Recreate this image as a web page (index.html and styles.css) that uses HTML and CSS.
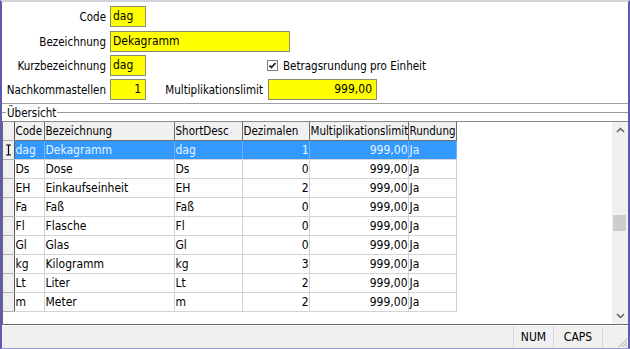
FILE: index.html
```html
<!DOCTYPE html>
<html lang="de">
<head>
    <meta charset="UTF-8">
    <title>Einheiten</title>
    <link rel="stylesheet" href="styles.css">
</head>
<body>
    <div class="window">
        <div class="form">
            <div class="row first">
                <label class="lbl">Code</label>
                <div class="field short">dag</div>
            </div>
            <div class="row">
                <label class="lbl">Bezeichnung</label>
                <div class="field long">Dekagramm</div>
            </div>
            <div class="row">
                <label class="lbl">Kurzbezeichnung</label>
                <div class="field short">dag</div>
                <div class="check">
                    <span class="box">
                        <svg width="9" height="9" viewBox="0 0 9 9"><polyline points="1.5,4.5 3.5,6.5 7.5,2" fill="none" stroke="#222" stroke-width="1.8"/></svg>
                    </span>
                    Betragsrundung pro Einheit
                </div>
            </div>
            <div class="row">
                <label class="lbl">Nachkommastellen</label>
                <div class="field short num">1</div>
                <label class="lbl2">Multiplikationslimit</label>
                <div class="field mid num">999,00</div>
            </div>
        </div>

        <div class="group">
            <span class="tick"></span>
            <span class="legend">Übersicht</span>
            <span class="rule"></span>
        </div>

        <div class="grid">
            <div class="grid-body">
                <table>
                    <colgroup>
                        <col class="c-ind"><col class="c-code"><col class="c-bez"><col class="c-short">
                        <col class="c-dez"><col class="c-mult"><col class="c-rund">
                    </colgroup>
                    <thead>
                        <tr>
                            <th class="ind"></th>
                            <th>Code</th>
                            <th>Bezeichnung</th>
                            <th>ShortDesc</th>
                            <th>Dezimalen</th>
                            <th>Multiplikationslimit</th>
                            <th>Rundung</th>
                        </tr>
                    </thead>
                    <tbody>
                        <tr class="sel">
                            <td class="ind">
                                <svg width="7" height="12" viewBox="0 0 7 12"><path d="M1 1h5M3.5 1v10M1 11h5" fill="none" stroke="#000" stroke-width="1.2"/></svg>
                            </td>
                            <td>dag</td><td>Dekagramm</td><td>dag</td><td class="r">1</td><td class="r">999,00</td><td>Ja</td>
                        </tr>
                        <tr><td class="ind"></td><td>Ds</td><td>Dose</td><td>Ds</td><td class="r">0</td><td class="r">999,00</td><td>Ja</td></tr>
                        <tr><td class="ind"></td><td>EH</td><td>Einkaufseinheit</td><td>EH</td><td class="r">2</td><td class="r">999,00</td><td>Ja</td></tr>
                        <tr><td class="ind"></td><td>Fa</td><td>Faß</td><td>Faß</td><td class="r">0</td><td class="r">999,00</td><td>Ja</td></tr>
                        <tr><td class="ind"></td><td>Fl</td><td>Flasche</td><td>Fl</td><td class="r">0</td><td class="r">999,00</td><td>Ja</td></tr>
                        <tr><td class="ind"></td><td>Gl</td><td>Glas</td><td>Gl</td><td class="r">0</td><td class="r">999,00</td><td>Ja</td></tr>
                        <tr><td class="ind"></td><td>kg</td><td>Kilogramm</td><td>kg</td><td class="r">3</td><td class="r">999,00</td><td>Ja</td></tr>
                        <tr><td class="ind"></td><td>Lt</td><td>Liter</td><td>Lt</td><td class="r">2</td><td class="r">999,00</td><td>Ja</td></tr>
                        <tr><td class="ind"></td><td>m</td><td>Meter</td><td>m</td><td class="r">2</td><td class="r">999,00</td><td>Ja</td></tr>
                    </tbody>
                </table>
            </div>
            <div class="scrollbar">
                <svg class="arrow" width="9" height="6" viewBox="0 0 9 6"><polyline points="1,5 4.5,1.5 8,5" fill="none" stroke="#606060" stroke-width="1.5"/></svg>
                <div class="track"><div class="thumb"></div></div>
                <svg class="arrow" width="9" height="6" viewBox="0 0 9 6"><polyline points="1,1 4.5,4.5 8,1" fill="none" stroke="#606060" stroke-width="1.5"/></svg>
            </div>
        </div>

        <div class="statusbar">
            <div class="panel fill"></div>
            <div class="panel num">NUM</div>
            <div class="panel caps">CAPS</div>
            <div class="panel grip">
                <svg width="12" height="12" viewBox="0 0 12 12"><path d="M11 3L3 11M11 6L6 11M11 9L9 11" stroke="#a8a8a8" stroke-width="1"/></svg>
            </div>
        </div>
    </div>
</body>
</html>
```

FILE: styles.css
```css
body {
    margin: 0;
    font-family: "DejaVu Sans Condensed", "Liberation Sans", sans-serif;
    font-size: 11px;
    color: #000;
}
.window {
    width: 630px;
    height: 349px;
    box-sizing: border-box;
    background: #fff;
    border-top: 2px solid #d4d4d8;
    border-left: 2px solid #5b5bb2;
    border-right: 2px solid #5b5bb2;
    border-bottom: 1px solid #9a9ad0;
    display: flex;
    flex-direction: column;
}
.form {
    height: 101px;
    box-sizing: border-box;
    padding-top: 4px;
    display: flex;
    flex-direction: column;
    gap: 3px;
    font-size: 11.5px;
}
.row {
    display: flex;
    align-items: center;
    height: 21px;
}
.row.first {
    margin-bottom: 1px;
}
.lbl {
    width: 104px;
    text-align: right;
    margin-right: 4px;
}
.lbl2 {
    width: 117px;
    text-align: right;
    margin-right: 5px;
}
.field {
    height: 21px;
    box-sizing: border-box;
    background: #ffff00;
    border: 1px solid #8c8c6c;
    padding: 0 2px;
    line-height: 19px;
    font-size: 12px;
}
.field.short { width: 36px; }
.field.long { width: 180px; }
.field.mid { width: 109px; }
.field.num { text-align: right; padding-right: 4px; }
.check {
    display: flex;
    align-items: center;
    margin-left: 121px;
    font-size: 11.5px;
}
.box {
    width: 11px;
    height: 11px;
    box-sizing: border-box;
    border: 1px solid #7a7a7a;
    background: #fff;
    margin-right: 5px;
    display: flex;
    align-items: center;
    justify-content: center;
}
.group {
    height: 17px;
    border-top: 1px solid #a0a0a0;
    display: flex;
    align-items: center;
    font-size: 11.5px;
}
.tick {
    width: 4px;
    border-top: 1px solid #9a9a9a;
}
.legend {
    padding: 0 1px;
}
.rule {
    flex: 1;
    border-top: 1px solid #9a9a9a;
}
.grid {
    flex: 1;
    display: flex;
    border-top: 1px solid #8a8a8a;
    border-bottom: 1px solid #6a6a6a;
    border-left: 1px solid #6a6a6a;
}
.grid-body {
    flex: 1;
    background: #fff;
}
table {
    border-collapse: collapse;
    table-layout: fixed;
    width: 443px;
    font-size: 12px;
}
.c-ind { width: 11px; }
.c-code { width: 30px; }
.c-bez { width: 130px; }
.c-short { width: 68px; }
.c-dez { width: 67px; }
.c-mult { width: 99px; }
.c-rund { width: 48px; }
th, td {
    height: 18px;
    padding: 0 1px;
    white-space: nowrap;
    overflow: hidden;
    text-align: left;
    font-weight: normal;
}
th {
    background: #f0f0f0;
    font-size: 11.5px;
    border-right: 1px solid #6e6e6e;
    border-bottom: 1px solid #6e6e6e;
}
td {
    border-right: 1px solid #d4d4d4;
    border-bottom: 1px solid #d4d4d4;
}
td.r {
    text-align: right;
    padding-right: 0;
}
.ind {
    background: #f0f0f0;
    padding: 0;
    border-right: 1px solid #555;
    border-bottom: 1px solid #b0b0b0;
    text-align: center;
}
td.ind svg {
    display: block;
    margin: 0 auto;
}
tr.sel td {
    background: #3399ff;
    color: #e8f3ff;
    border-right-color: #6ab2ff;
}
tr.sel td.ind {
    background: #f0f0f0;
    border-right-color: #555;
}
.scrollbar {
    width: 16px;
    background: #f0f0f0;
    display: flex;
    flex-direction: column;
    align-items: center;
    padding: 5px 0;
    box-sizing: border-box;
}
.arrow {
    flex: none;
}
.track {
    flex: 1;
    width: 100%;
    position: relative;
}
.thumb {
    position: absolute;
    left: 1px;
    right: 2px;
    top: 82px;
    height: 16px;
    background: #cdcdcd;
}
.statusbar {
    height: 22px;
    background: #f0f0f0;
    border-top: 1px solid #fff;
    display: flex;
    font-size: 12px;
}
.panel {
    display: flex;
    align-items: center;
    justify-content: center;
    border-left: 1px solid #d9d9d9;
}
.panel.fill {
    flex: 1;
    border-left: none;
}
.num { width: 39px; }
.caps { width: 48px; }
.grip {
    width: 25px;
    align-items: flex-end;
    justify-content: flex-end;
}
```
